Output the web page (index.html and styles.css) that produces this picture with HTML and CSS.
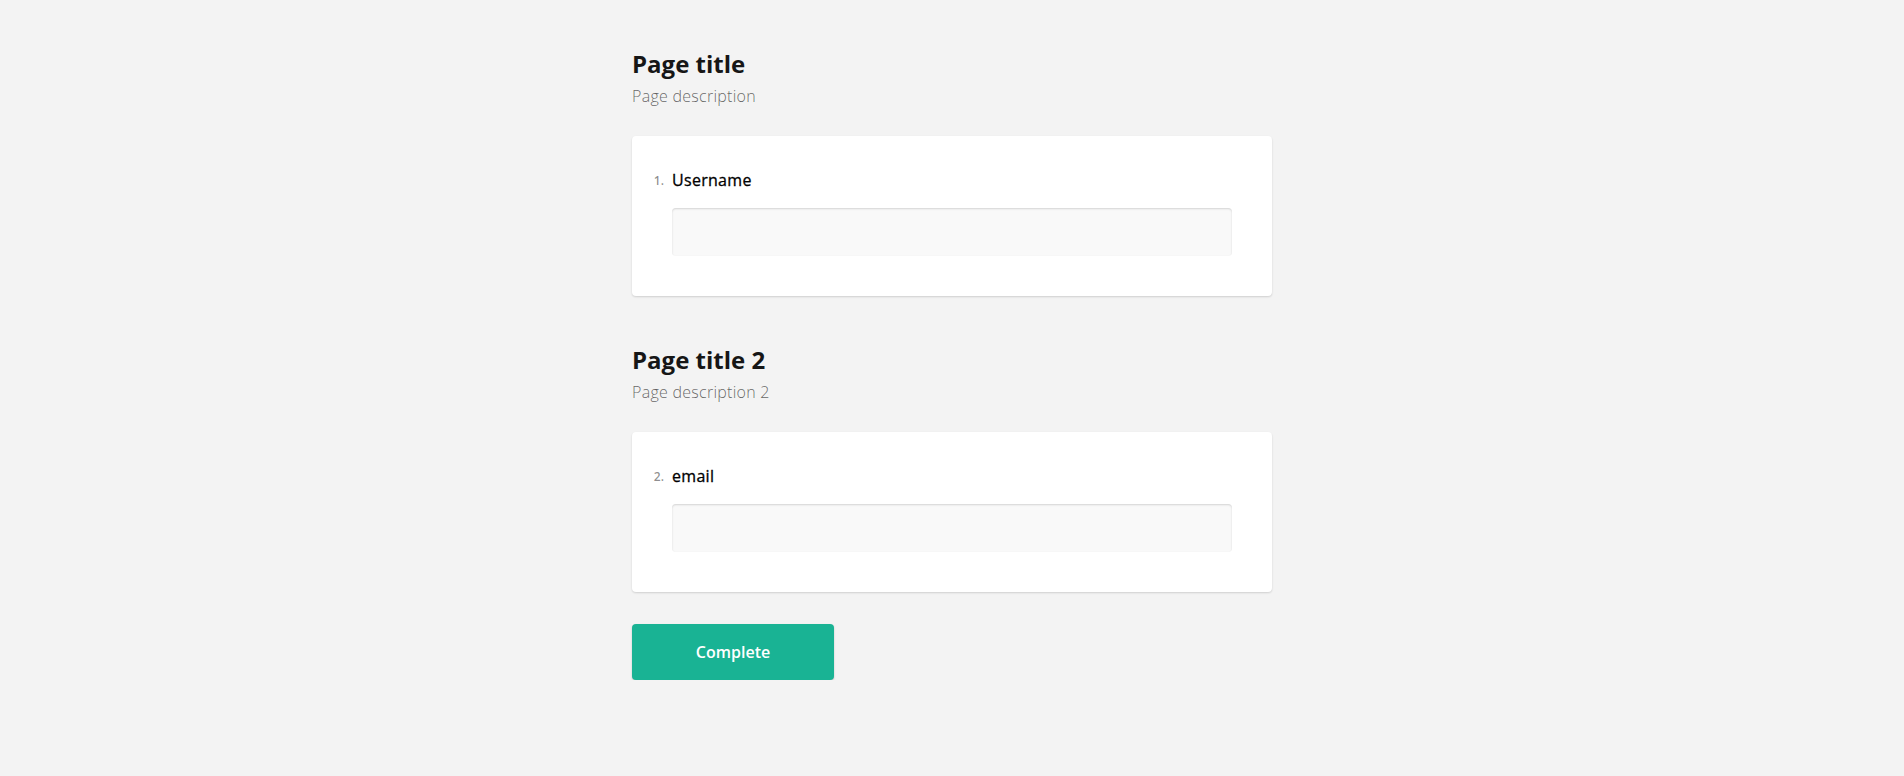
FILE: index.html
```html
<!DOCTYPE html>
<html lang="en">
<head>
<meta charset="utf-8">
<title>Survey</title>
<link rel="stylesheet" href="styles.css">
</head>
<body>
<form class="survey">
  <section class="page">
    <h2 class="page-title">Page title</h2>
    <p class="page-description">Page description</p>
    <div class="card">
      <label class="question" for="username"><span class="number">1.</span><span class="label">Username</span></label>
      <input class="field" id="username" type="text">
    </div>
  </section>
  <section class="page">
    <h2 class="page-title">Page title 2</h2>
    <p class="page-description">Page description 2</p>
    <div class="card">
      <label class="question" for="email"><span class="number">2.</span><span class="label">email</span></label>
      <input class="field" id="email" type="text">
    </div>
  </section>
  <button class="complete" type="button">Complete</button>
</form>
</body>
</html>
```
FILE: styles.css
```css
* { box-sizing: border-box; }
body {
  margin: 0;
  background: #f3f3f3;
  font-family: "Open Sans", sans-serif;
  font-size: 16px;
  line-height: 24px;
  color: #161616;
}
.survey { width: 640px; margin: 0 auto; padding-top: 48px; }
.page { margin-bottom: 48px; }
.page-title { margin: 0; font-size: 24px; font-weight: 700; line-height: 32px; }
.page-description {
  margin: 4px 0 28px;
  font-weight: 300;
  letter-spacing: 0.27px;
  color: rgba(0, 0, 0, 0.6);
}
.card {
  height: 160px;
  padding: 32px 40px 40px;
  background: #fff;
  border-radius: 4px;
  box-shadow: 0 1px 2px rgba(0, 0, 0, 0.15);
}
.question { display: flex; align-items: center; margin-left: -40px; }
.number {
  width: 40px;
  padding: 1px 8px 0 0;
  text-align: right;
  font-size: 12px;
  line-height: 23px;
  font-weight: 600;
  color: rgba(0, 0, 0, 0.45);
}
.label {
  font-weight: 400;
  letter-spacing: 0.3px;
  color: #000;
  -webkit-text-stroke: 0.3px #000;
}
.field {
  display: block;
  width: 100%;
  height: 48px;
  margin-top: 16px;
  padding: 12px 16px;
  border: 0;
  border-radius: 4px;
  background: #f9f9f9;
  box-shadow: inset 0 1px 2px rgba(0, 0, 0, 0.15);
  font: inherit;
  outline: none;
}
.complete {
  display: block;
  width: 202px;
  height: 56px;
  margin-top: -16px;
  border: 0;
  border-radius: 4px;
  background: #19b394;
  color: #fff;
  font: 600 16px/24px "Open Sans", sans-serif;
  box-shadow: 0 1px 2px rgba(0, 0, 0, 0.2);
}
```
